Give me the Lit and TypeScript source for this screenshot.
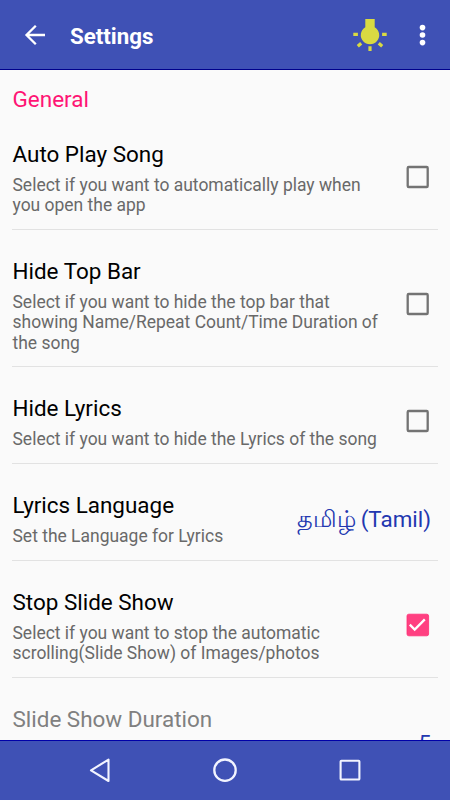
import { LitElement, html, css, svg, nothing } from "lit";
import { customElement, property } from "lit/decorators.js";

@customElement("check-box")
class CheckBox extends LitElement {
  @property({ type: Boolean }) checked = false;

  static styles = css`
    :host { display: block; width: 24px; height: 24px; margin: 0 1px 2px 0; }
    svg { display: block; }
  `;

  render() {
    return html`<svg width="24" height="24" viewBox="0 0 24 24" fill="none">
      ${this.checked
        ? svg`<rect x="1" y="1.2" width="21.6" height="21.6" rx="1.8" fill="#ff4081" stroke="#ff2d75" stroke-width=".8"/>
            <path d="M3.8 11.6 8.7 16.5 18.8 6.4" stroke="#fff" stroke-width="2.3"/>`
        : svg`<rect x="1.7" y="2" width="20" height="20" rx="1.1" stroke="#737373" stroke-width="2.3"/>`}
    </svg>`;
  }
}

@customElement("setting-row")
class SettingRow extends LitElement {
  @property() heading = "";
  @property({ attribute: false }) lines: string[] = [];
  @property({ type: Boolean }) disabled = false;

  static styles = css`
    :host {
      display: flex;
      align-items: center;
      box-sizing: border-box;
      flex: none;
      margin: 0 12px;
      padding: 28px 7px 14px 0.5px;
      border-bottom: 1px solid #e2e2e2;
    }
    .text { flex: 1; white-space: nowrap; }
    .heading { font-size: 22.45px; line-height: 27px; color: #000; }
    .heading.disabled { color: #808080; }
    .desc { margin: 7.1px 0 -0.6px; font-size: 17.48px; line-height: 20.4px; color: #696969; }
  `;

  render() {
    return html`
      <div class="text">
        <div class="heading ${this.disabled ? "disabled" : ""}">${this.heading}</div>
        ${this.lines.length
          ? html`<div class="desc">${this.lines.map((l) => html`<div>${l}</div>`)}</div>`
          : nothing}
      </div>
      <slot></slot>
    `;
  }
}

@customElement("app-root")
class AppRoot extends LitElement {
  static styles = css`
    :host {
      display: flex;
      flex-direction: column;
      width: 450px;
      height: 800px;
      overflow: hidden;
      background: #fafafa;
      font-family: Roboto, "Noto Sans", sans-serif;
    }
    .bar {
      flex: none;
      display: flex;
      align-items: center;
      box-sizing: border-box;
      height: 70px;
      background: #3f51b5;
      border-bottom: 1px solid #00008c;
    }
    svg { display: block; flex: none; }
    .back { margin-left: 20px; }
    .title {
      flex: 1;
      margin: 3px 0 0 20px;
      font-size: 22.3px;
      font-weight: 700;
      line-height: 28px;
      color: #fff;
    }
    .more { margin: 0 13px 0 19px; }
    .list { flex: 1; min-height: 0; overflow: hidden; display: flex; flex-direction: column; }
    .section {
      flex: none;
      height: 43px;
      box-sizing: border-box;
      padding: 15px 12.5px 0;
      font-size: 22.5px;
      line-height: 28px;
      color: #ff1474;
    }
    .r1 { height: 117px; }
    .r2 { height: 137px; }
    .r3 { height: 97px; }
    .last { height: 117px; align-items: flex-start; }
    .last .value { margin-top: 24px; }
    .value { font-size: 22.4px; line-height: 27px; color: #2237b0; white-space: nowrap; }
    .tamil { font-size: 23.5px; line-height: 1; margin-right: -1px; }
    .nav {
      flex: none;
      display: flex;
      align-items: center;
      justify-content: center;
      gap: 93px;
      box-sizing: border-box;
      height: 60px;
      background: #3f51b5;
      border-top: 1px solid #0000a8;
    }
  `;

  render() {
    return html`
      <div class="bar">
        <svg class="back" width="30" height="30" viewBox="0 0 30 30" fill="none" stroke="#fff" stroke-width="2.3">
          <path d="M25 15H7M15.8 5.7 6.5 15l9.3 9.3"/>
        </svg>
        <div class="title">Settings</div>
        <svg width="36" height="36" viewBox="0 0 36 36" fill="#d9da42">
          <path d="M13.3 2h9.4v8.2a9.2 9.2 0 1 1-9.4 0z"/>
          <path d="M1.3 17.3h4.6M30.1 17.3h4.6M18 29.2v4.8M5.8 29.3l3.4-3M30.2 29.3l-3.4-3" stroke="#d9da42" stroke-width="3.2"/>
        </svg>
        <svg class="more" width="30" height="30" viewBox="0 0 30 30" fill="#fff">
          <circle cx="15.5" cy="7.6" r="2.8"/><circle cx="15.5" cy="15" r="2.8"/><circle cx="15.5" cy="22.6" r="2.8"/>
        </svg>
      </div>
      <div class="list">
        <div class="section">General</div>
        <setting-row class="r1" heading="Auto Play Song"
          .lines=${["Select if you want to automatically play when", "you open the app"]}>
          <check-box></check-box>
        </setting-row>
        <setting-row class="r2" heading="Hide Top Bar"
          .lines=${["Select if you want to hide the top bar that", "showing Name/Repeat Count/Time Duration of", "the song"]}>
          <check-box></check-box>
        </setting-row>
        <setting-row class="r3" heading="Hide Lyrics" .lines=${["Select if you want to hide the Lyrics of the song"]}>
          <check-box></check-box>
        </setting-row>
        <setting-row class="r3" heading="Lyrics Language" .lines=${["Set the Language for Lyrics"]}>
          <div class="value"><span class="tamil">தமிழ்</span> (Tamil)</div>
        </setting-row>
        <setting-row class="r1" heading="Stop Slide Show"
          .lines=${["Select if you want to stop the automatic", "scrolling(Slide Show) of Images/photos"]}>
          <check-box checked></check-box>
        </setting-row>
        <setting-row class="last" heading="Slide Show Duration" disabled>
          <div class="value">5</div>
        </setting-row>
      </div>
      <div class="nav">
        <svg width="32" height="32" viewBox="0 0 32 32" fill="none" stroke="#f2f4ff" stroke-width="2.1" stroke-linejoin="round">
          <path d="M24.5 4.6v21.4L7 15.3z"/>
        </svg>
        <svg width="32" height="32" viewBox="0 0 32 32" fill="none" stroke="#f2f4ff" stroke-width="2.3">
          <circle cx="16" cy="15.2" r="10.7"/>
        </svg>
        <svg width="32" height="32" viewBox="0 0 32 32" fill="none" stroke="#f2f4ff" stroke-width="2.1">
          <rect x="6.6" y="5.7" width="18.8" height="18.8" rx=".8"/>
        </svg>
      </div>
    `;
  }
}
